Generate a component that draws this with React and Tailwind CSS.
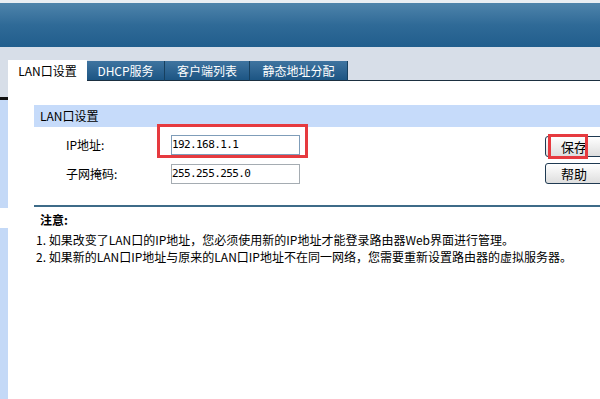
import React from 'react';

const cjk = { fontFamily: '"Noto Sans CJK SC", "Liberation Sans", sans-serif' };

function Tab({ label, width, active }) {
  if (active) {
    return (
      <div className={`h-[21px] ${width} bg-white flex items-center justify-center text-[12px] text-black`}>
        {label}
      </div>
    );
  }
  return (
    <div
      className={`h-[20px] ${width} flex items-center justify-center text-[12px] text-white border-r border-[#17405f] border-b border-b-[#1b2f40] bg-gradient-to-b from-[#3f74a0] to-[#1c5583]`}
    >
      {label}
    </div>
  );
}

function Field({ label, value, focused }) {
  return (
    <div className="flex items-center h-[20px]">
      <div className="w-[105px] pl-[32px] text-[12px] text-black box-content">{label}</div>
      <div
        className={`w-[129px] h-[20px] border ${focused ? 'border-[#7f9db9]' : 'border-[#a5acb2]'} bg-white flex items-center text-[11px] tracking-[-0.6px] text-black`}
        style={{ fontFamily: '"DejaVu Sans Mono", monospace' }}
      >
        {value}
      </div>
    </div>
  );
}

function Button({ label }) {
  return (
    <div className="w-[58px] h-[21px] rounded-[3px] border border-[#1f3a52] bg-gradient-to-b from-white to-[#dedede] flex items-center justify-center text-[13px] text-black">
      {label}
    </div>
  );
}

export default function App() {
  return (
    <div className="w-[600px] h-[399px] overflow-hidden bg-white flex flex-col" style={cjk}>
      <div className="h-[3px] bg-[#e9eef3]" />
      <div className="h-[44px] bg-gradient-to-b from-[#4e84ab] via-[#2f6a97] to-[#215e8d]" />
      <div className="flex flex-1">
        <div className="w-[8px] flex flex-col">
          <div className="h-[50px] bg-[#d7dee8]" />
          <div className="h-[3px] bg-[#111]" />
          <div className="h-[108px] bg-[#c4d9f7]" />
          <div className="h-[20px] bg-white" />
          <div className="flex-1 bg-[#c4d9f7]" />
        </div>
        <div className="flex-1 flex flex-col">
          <div className="h-[34px] bg-[#d7dee8] flex items-end">
            <Tab label="LAN口设置" width="w-[79px]" active />
            <Tab label="DHCP服务" width="w-[78px]" />
            <Tab label="客户端列表" width="w-[85px]" />
            <Tab label="静态地址分配" width="w-[98px]" />
            <div className="flex-1 border-b border-[#1b2f40]" />
          </div>
          <div className="pl-[26px] pt-[24px]">
            <div className="h-[22px] bg-[#c6dbfa] flex items-center pl-[6px] text-[12px] text-black">LAN口设置</div>
            <div className="relative h-[78px] flex">
              <div className="flex flex-col pt-[8px] gap-[9px]">
                <Field label="IP地址:" value="192.168.1.1" focused />
                <Field label="子网掩码:" value="255.255.255.0" />
              </div>
              <div className="ml-auto flex flex-col pt-[9px] gap-[6px] mr-[-3px]">
                <Button label="保存" />
                <Button label="帮助" />
              </div>
              <div className="absolute left-[123px] top-[-3px] w-[151px] h-[34px] border-[3px] border-[#e63a3f]" />
              <div className="absolute left-[514px] top-[7px] w-[40px] h-[25px] border-[3px] border-[#e63a3f]" />
            </div>
            <div className="h-[2px] bg-[#3d6b88]" />
            <div className="pt-[4px] text-[12px] text-black leading-[17px]">
              <div className="pl-[6px] font-bold mb-[3px]">注意:</div>
              <div className="pl-[2px]">1. 如果改变了LAN口的IP地址，您必须使用新的IP地址才能登录路由器Web界面进行管理。</div>
              <div className="pl-[2px]">2. 如果新的LAN口IP地址与原来的LAN口IP地址不在同一网络，您需要重新设置路由器的虚拟服务器。</div>
            </div>
          </div>
        </div>
      </div>
    </div>
  );
}
